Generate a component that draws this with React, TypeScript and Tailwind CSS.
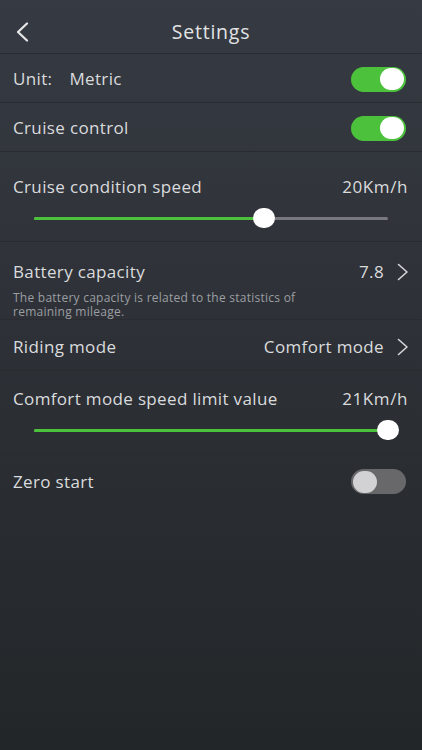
function Toggle({ on }: { on: boolean }) {
  return (
    <div
      className={
        on
          ? "flex h-[25px] w-[55px] items-center justify-end rounded-full bg-[#4cc23c] px-[2px]"
          : "flex h-[25px] w-[55px] items-center justify-start rounded-full bg-[#68686a] px-[2px]"
      }
    >
      <div
        className={
          on
            ? "h-[22px] w-[24px] rounded-full bg-white"
            : "h-[22px] w-[24px] rounded-full bg-[#d2d2d4]"
        }
      />
    </div>
  );
}

function Slider({ pct }: { pct: number }) {
  return (
    <div className="relative mx-[34px] mt-[17px] h-[3px] rounded-full bg-[#78787e]">
      <div
        className="h-full rounded-full bg-[#4cc23c]"
        style={{ width: `${pct}%` }}
      />
      <div
        className="absolute top-1/2 h-[20px] w-[22px] -translate-x-1/2 -translate-y-1/2 rounded-full bg-white"
        style={{ left: `${pct}%` }}
      />
    </div>
  );
}

function Chevron() {
  return (
    <svg width="12" height="18" viewBox="0 0 12 18" className="text-[#d6d7d9]">
      <polyline
        points="1.5,1.5 10,9 1.5,16.5"
        fill="none"
        stroke="currentColor"
        strokeWidth="1.6"
        strokeLinecap="round"
        strokeLinejoin="round"
      />
    </svg>
  );
}

export default function App() {
  return (
    <div
      className="flex min-h-[750px] flex-col bg-gradient-to-b from-[#363a42] to-[#232629] text-[#dadbdd] tracking-[0.35px]"
      style={{ fontFamily: "'Open Sans', 'Noto Sans', sans-serif" }}
    >
      <div className="relative flex h-[54px] items-center justify-center border-b border-[#2a2c31] pt-[10px]">
        <svg
          width="14"
          height="20"
          viewBox="0 0 14 20"
          className="absolute left-[15px] top-[22px] text-[#e8e8ea]"
        >
          <polyline
            points="12,1.5 3,10 12,18.5"
            fill="none"
            stroke="currentColor"
            strokeWidth="2.2"
            strokeLinecap="round"
            strokeLinejoin="round"
          />
        </svg>
        <span className="text-[19.5px] tracking-[0.8px] text-[#e2e3e5]">Settings</span>
      </div>

      <div className="flex h-[49px] items-center justify-between border-b border-[#2a2c31] pl-[13px] pr-[16px] pt-[2px]">
        <span className="text-[17px]">
          Unit:<span className="ml-[17px]">Metric</span>
        </span>
        <Toggle on />
      </div>

      <div className="flex h-[49px] items-center justify-between border-b border-[#2a2c31] pl-[13px] pr-[16px] pt-[2px]">
        <span className="text-[17px]">Cruise control</span>
        <Toggle on />
      </div>

      <div className="h-[90px] border-b border-[#2a2c31] pt-[22px]">
        <div className="flex items-center justify-between pl-[13px] pr-[14px]">
          <span className="text-[17px]">Cruise condition speed</span>
          <span className="text-[17px] tracking-[0.6px]">20Km/h</span>
        </div>
        <Slider pct={65} />
      </div>

      <div className="h-[78px] border-b border-[#2a2c31] pt-[17px]">
        <div className="flex items-center justify-between pl-[13px] pr-[13px]">
          <span className="text-[17px]">Battery capacity</span>
          <span className="flex items-center gap-[13px] text-[17px]">
            7.8
            <Chevron />
          </span>
        </div>
        <p className="mt-[6px] w-[310px] pl-[13px] text-[12px] leading-[14px] tracking-[0.25px] text-[#9c9ea2]">
          The battery capacity is related to the statistics of remaining mileage.
        </p>
      </div>

      <div className="flex h-[51px] items-center justify-between border-b border-[#2a2c31] pl-[13px] pr-[13px] pt-[4px]">
        <span className="text-[17px]">Riding mode</span>
        <span className="flex items-center gap-[13px] text-[17px]">
          Comfort mode
          <Chevron />
        </span>
      </div>

      <div className="h-[84px] border-b border-[#2a2c31] pt-[15px]">
        <div className="flex items-center justify-between pl-[13px] pr-[14px]">
          <span className="text-[17px]">Comfort mode speed limit value</span>
          <span className="text-[17px] tracking-[0.6px]">21Km/h</span>
        </div>
        <Slider pct={100} />
      </div>

      <div className="flex h-[50px] items-center justify-between border-b border-[#2a2c31] pl-[13px] pr-[16px] pt-[4px]">
        <span className="text-[17px]">Zero start</span>
        <Toggle on={false} />
      </div>
    </div>
  );
}
